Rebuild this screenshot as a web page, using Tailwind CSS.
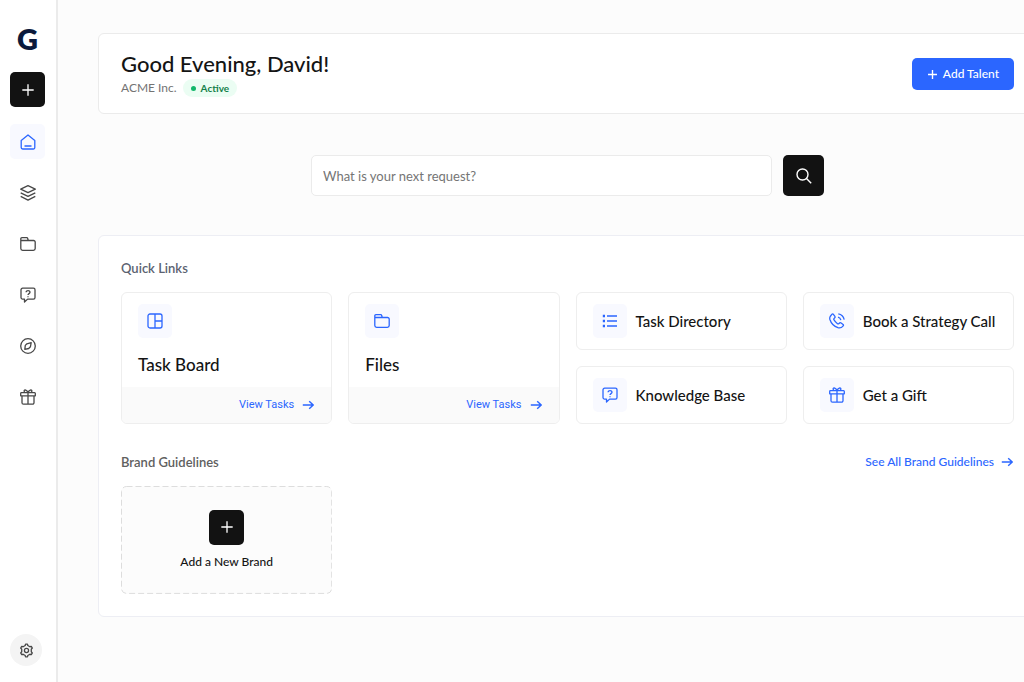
<!DOCTYPE html>
<html lang="en">
<head>
<meta charset="utf-8">
<meta name="viewport" content="width=device-width, initial-scale=1">
<title>Dashboard</title>
<script src="https://cdn.jsdelivr.net/npm/@tailwindcss/browser@4"></script>
</head>
<body class="bg-[#fcfcfc] font-['Lato','Liberation_Sans',sans-serif] text-[#141414]">
<svg class="hidden" aria-hidden="true">
  <symbol id="plus" viewBox="0 0 16 16"><path d="M8 1.500v13M1.500 8h13"/></symbol>
  <symbol id="home" viewBox="0 0 16 16"><path d="M1.2 6.4 8 1l6.800 5.400v7.200a1.400 1.400 0 0 1-1.400 1.400H2.600a1.400 1.400 0 0 1-1.400-1.400zM4.500 12h7"/></symbol>
  <symbol id="layers" viewBox="0 0 16 16"><path d="M8 .7 15.300 4.200 8 7.700.7 4.200zM.7 7.800 8 11.400l7.300-3.600M.7 11.400 8 15.200l7.300-3.800"/></symbol>
  <symbol id="folder" viewBox="0 0 16 16"><path d="M.8 4.500v8.100A1.800 1.800 0 0 0 2.600 14.400h10.800a1.800 1.800 0 0 0 1.800-1.800V6.100a1.600 1.600 0 0 0-1.600-1.600H8.300L7.600 2.300a1 1 0 0 0-.9-.7H1.900A1.100 1.100 0 0 0 .8 2.700v1.800h7.500"/></symbol>
  <symbol id="help" viewBox="0 0 16 16"><path d="M2.600 1.200h10.800A1.600 1.600 0 0 1 15 2.800v7.700a1.600 1.600 0 0 1-1.600 1.600H7.600L4.500 15v-2.900H2.600A1.600 1.600 0 0 1 1 10.500V2.800a1.600 1.600 0 0 1 1.600-1.600zM6.100 5.300C6.100 3.100 10 3.100 10 5.300c0 1.300-2 1.300-2 2.600M8 9.300v.9"/></symbol>
  <symbol id="compass" viewBox="0 0 16 16"><circle cx="8" cy="8" r="7.300"/><path d="M11.200 4.700 6.900 5.800 5.300 7.400l-.5 3.900 3.900-.8 1.700-1.700z"/></symbol>
  <symbol id="gift" viewBox="0 0 16 16"><path d="M1.400 3.700h13.200a.7.7 0 0 1 .7.7v2.400H.7V4.400a.7.7 0 0 1 .7-.7zM2 6.800v6.900a1.500 1.500 0 0 0 1.500 1.500h9a1.500 1.500 0 0 0 1.500-1.500V6.800M8 3.700v11.500M8 3.600C7 .9 4.200.2 4.100 2c0 .8.500 1.300 1.100 1.700M8 3.600C9 .9 11.800.2 11.900 2c0 .8-.5 1.300-1.100 1.700"/></symbol>
  <symbol id="gear" viewBox="0 0 16 16"><path d="M6.600 2.700 7 1.200h2l.4 1.500 2.200 1.300 1.500-.4 1.100 1.800-1.100 1.200v2.800l1.100 1.200-1.100 1.800-1.500-.4-2.200 1.300-.4 1.500H7l-.4-1.500L4.400 12l-1.500.4-1.100-1.800 1.100-1.200V6.600L1.800 5.400l1.100-1.800 1.500.4z"/><circle cx="8" cy="8" r="2.200"/></symbol>
  <symbol id="board" viewBox="0 0 16 16"><rect x="1" y="1" width="14" height="14" rx="2"/><path d="M8 1v14M8 8h7"/></symbol>
  <symbol id="list" viewBox="0 0 16 16"><path d="M5 3h10M5 8h10M5 13h10"/><path d="M.8 3h2.200M.8 8h2.200M.8 13h2.200" stroke-width="2.400"/></symbol>
  <symbol id="phone" viewBox="0 0 16 16"><path d="M1.200 3.500 3 1.200c.5-.5 1-.4 1.400.1l1.500 2c.4.500.3 1-.1 1.400l-.8 1c-.3.400-.3.800 0 1.200a15 15 0 0 0 3.500 3.800c.4.300.8.300 1.200 0l1.100-.8c.4-.3.900-.3 1.300 0l2 1.500c.5.400.5 1 .1 1.400-1.400 1.800-3.200 2.500-5.300 1.900A13 13 0 0 1 .9 6.500c-.3-1.100-.2-2.100.3-3zM9.300.9c3 .5 5.200 2.700 5.900 5.800M9 4.200c1.500.4 2.500 1.400 2.900 2.900"/></symbol>
  <symbol id="arrow" viewBox="0 0 12 12"><path d="M.8 6h10.400M7.200 2.200 11.200 6 7.200 9.800"/></symbol>
  <symbol id="search" viewBox="0 0 16 16"><circle cx="6.500" cy="6.500" r="5.500"/><path d="m10.500 10.500 4.700 4.700"/></symbol>
</svg>

<div class="flex min-h-screen">
  <aside class="flex w-[58px] shrink-0 flex-col items-center border-r-2 border-[#ebebeb] bg-white pt-5 pr-px pb-4 text-[#484848]">
    <a href="#" aria-label="Home page" class="text-[29px] leading-[38px] font-extrabold text-[#0b1a3c]">G</a>
    <button aria-label="New request" class="mt-[14px] flex size-[35px] items-center justify-center rounded-[5px] bg-[#121212] text-white"><svg class="size-[14px] fill-none stroke-current stroke-[1.5]"><use href="#plus"/></svg></button>
    <nav class="mt-[17px] flex flex-col gap-[17px]" aria-label="Main">
      <a href="#" aria-label="Home" class="flex size-[35px] items-center justify-center rounded-[5px] bg-[#f8f9ff] text-[#2b66ff]"><svg class="size-4 fill-none stroke-current stroke-[1.3]" stroke-linejoin="round"><use href="#home"/></svg></a>
      <a href="#" aria-label="Tasks" class="flex h-[34px] items-center justify-center"><svg class="size-4 fill-none stroke-current stroke-[1.3]" stroke-linejoin="round"><use href="#layers"/></svg></a>
      <a href="#" aria-label="Files" class="flex h-[34px] items-center justify-center"><svg class="size-4 fill-none stroke-current stroke-[1.3]" stroke-linejoin="round"><use href="#folder"/></svg></a>
      <a href="#" aria-label="Help" class="flex h-[34px] items-center justify-center"><svg class="size-4 fill-none stroke-current stroke-[1.3]" stroke-linejoin="round"><use href="#help"/></svg></a>
      <a href="#" aria-label="Explore" class="flex h-[34px] items-center justify-center"><svg class="size-4 fill-none stroke-current stroke-[1.3]" stroke-linejoin="round"><use href="#compass"/></svg></a>
      <a href="#" aria-label="Gifts" class="flex h-[34px] items-center justify-center"><svg class="size-4 fill-none stroke-current stroke-[1.3]" stroke-linejoin="round"><use href="#gift"/></svg></a>
    </nav>
    <button aria-label="Settings" class="mt-auto mr-[3px] flex size-8 items-center justify-center rounded-full bg-[#f4f4f4]"><svg class="size-[15px] fill-none stroke-current stroke-[1.4]" stroke-linejoin="round"><use href="#gear"/></svg></button>
  </aside>

  <main class="min-w-0 flex-1 overflow-hidden pt-[33px] pl-10">
    <div class="-mr-[13px]">
      <header class="flex items-center justify-between rounded-md border border-[#ebebeb] bg-white px-[22px] pt-4 pb-[15px]">
        <div>
          <h1 class="text-[22px] leading-7 font-medium">Good Evening, David!</h1>
          <div class="flex items-center gap-[6px] text-xs leading-5 text-[#737373]">
            <span>ACME Inc.</span>
            <span class="flex items-center gap-[5px] rounded-full bg-[#ebfdf3] px-2 text-[10px] leading-[18px] font-bold text-[#14804a]"><span class="size-[5px] rounded-full bg-[#12b76a]"></span>Active</span>
          </div>
        </div>
        <button class="flex h-8 items-center gap-[5px] rounded-[5px] bg-[#2b66ff] px-[15px] text-xs font-medium text-white"><svg class="size-[11px] fill-none stroke-current stroke-2"><use href="#plus"/></svg>Add Talent</button>
      </header>

      <form class="mx-auto mt-[41px] flex w-[513px] max-w-full gap-[11px]">
        <input type="text" aria-label="What is your next request?" placeholder="What is your next request?" class="h-[41px] min-w-0 flex-1 rounded-[5px] border border-[#ebebeb] bg-white px-[11px] text-[13px] placeholder:text-[#757575]">
        <button type="button" aria-label="Search" class="flex h-[41px] w-[41px] items-center justify-center rounded-[5px] bg-[#121212] text-white"><svg class="size-4 fill-none stroke-current stroke-[1.4]"><use href="#search"/></svg></button>
      </form>

      <div class="mt-[39px] rounded-md border border-[#edeef4] bg-white px-[22px] py-[22px]">
        <section>
          <h2 class="text-[13px] leading-5 font-semibold text-[#5b6271]">Quick Links</h2>
          <div class="mt-[14px] grid grid-cols-4 gap-4">
            <article class="row-span-2 flex flex-col overflow-hidden rounded-md border border-[#eeeeee]">
              <div class="px-4 pt-[11px] pb-[10px]">
                <div class="flex size-[34px] items-center justify-center rounded-[5px] bg-[#f8f9ff] text-[#2b66ff]"><svg class="size-4 fill-none stroke-current stroke-[1.3]"><use href="#board"/></svg></div>
                <h3 class="mt-[15px] text-[17px] leading-6 font-medium">Task Board</h3>
              </div>
              <a href="#" class="flex flex-1 items-center justify-end gap-2 bg-[#fafafa] px-[17px] font-['Roboto','Liberation_Sans',sans-serif] text-[11px] leading-4 text-[#2b66ff]">View Tasks<svg class="size-3 fill-none stroke-current stroke-[1.4]"><use href="#arrow"/></svg></a>
            </article>
            <article class="row-span-2 flex flex-col overflow-hidden rounded-md border border-[#eeeeee]">
              <div class="px-4 pt-[11px] pb-[10px]">
                <div class="flex size-[34px] items-center justify-center rounded-[5px] bg-[#f8f9ff] text-[#2b66ff]"><svg class="size-4 fill-none stroke-current stroke-[1.3]" stroke-linejoin="round"><use href="#folder"/></svg></div>
                <h3 class="mt-[15px] text-[17px] leading-6 font-medium">Files</h3>
              </div>
              <a href="#" class="flex flex-1 items-center justify-end gap-2 bg-[#fafafa] px-[17px] font-['Roboto','Liberation_Sans',sans-serif] text-[11px] leading-4 text-[#2b66ff]">View Tasks<svg class="size-3 fill-none stroke-current stroke-[1.4]"><use href="#arrow"/></svg></a>
            </article>
            <a href="#" class="flex items-center gap-[9px] rounded-md border border-[#eeeeee] pl-4 py-[11px] text-[15px] leading-5 font-medium whitespace-nowrap"><span class="flex size-[34px] shrink-0 items-center justify-center rounded-[5px] bg-[#f8f9ff] text-[#2b66ff]"><svg class="size-4 fill-none stroke-current stroke-[1.3]"><use href="#list"/></svg></span>Task Directory</a>
            <a href="#" class="flex items-center gap-[9px] rounded-md border border-[#eeeeee] pl-4 py-[11px] text-[15px] leading-5 font-medium whitespace-nowrap"><span class="flex size-[34px] shrink-0 items-center justify-center rounded-[5px] bg-[#f8f9ff] text-[#2b66ff]"><svg class="size-4 fill-none stroke-current stroke-[1.3]" stroke-linejoin="round"><use href="#phone"/></svg></span>Book a Strategy Call</a>
            <a href="#" class="flex items-center gap-[9px] rounded-md border border-[#eeeeee] pl-4 py-[11px] text-[15px] leading-5 font-medium whitespace-nowrap"><span class="flex size-[34px] shrink-0 items-center justify-center rounded-[5px] bg-[#f8f9ff] text-[#2b66ff]"><svg class="size-4 fill-none stroke-current stroke-[1.3]" stroke-linejoin="round"><use href="#help"/></svg></span>Knowledge Base</a>
            <a href="#" class="flex items-center gap-[9px] rounded-md border border-[#eeeeee] pl-4 py-[11px] text-[15px] leading-5 font-medium whitespace-nowrap"><span class="flex size-[34px] shrink-0 items-center justify-center rounded-[5px] bg-[#f8f9ff] text-[#2b66ff]"><svg class="size-4 fill-none stroke-current stroke-[1.3]" stroke-linejoin="round"><use href="#gift"/></svg></span>Get a Gift</a>
          </div>
        </section>

        <section class="mt-7">
          <div class="flex items-center justify-between">
            <h2 class="text-[13px] leading-5 font-semibold text-[#606060]">Brand Guidelines</h2>
            <a href="#" class="flex items-center gap-[7px] pr-px text-xs leading-5 font-medium text-[#2b66ff]">See All Brand Guidelines<svg class="size-3 fill-none stroke-current stroke-[1.4]"><use href="#arrow"/></svg></a>
          </div>
          <div class="mt-[14px] grid grid-cols-4 gap-4">
            <button class="relative flex h-[108px] flex-col items-center justify-center gap-2 rounded-md bg-[#fcfcfc] text-xs leading-[18px] font-medium">
              <svg class="absolute inset-0 size-full fill-none stroke-[#dddddd]" stroke-dasharray="6 3" aria-hidden="true"><rect x="0.500" y="0.500" width="99.500%" height="99%" rx="5"/></svg>
              <span class="flex size-[35px] items-center justify-center rounded-[5px] bg-[#121212] text-white"><svg class="size-[14px] fill-none stroke-current stroke-[1.5]"><use href="#plus"/></svg></span>
              Add a New Brand
            </button>
          </div>
        </section>
      </div>
    </div>
  </main>
</div>
</body>
</html>
